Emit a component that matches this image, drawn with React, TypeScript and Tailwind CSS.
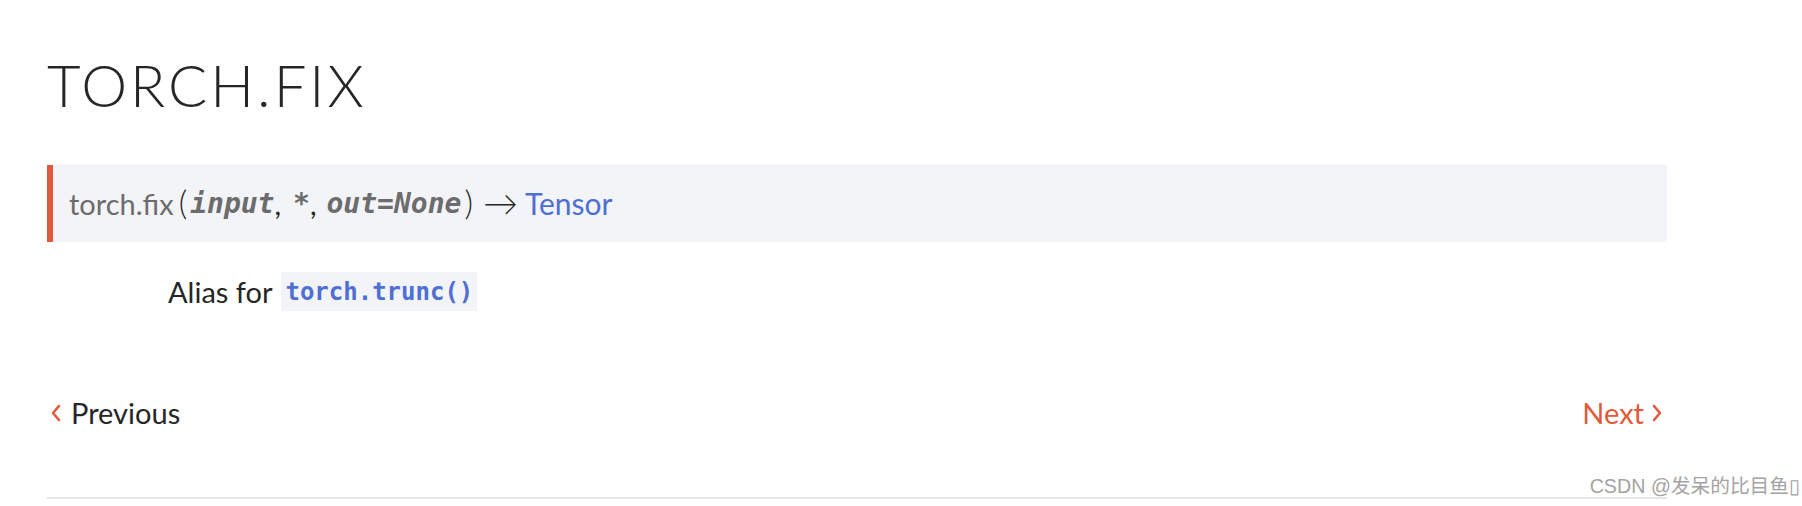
export default function App() {
  const mono = { fontFamily: "'DejaVu Sans Mono', monospace" };
  return (
    <div className="relative w-[1802px] h-[506px] bg-white overflow-hidden" style={{ fontFamily: "Lato, 'Open Sans', sans-serif" }}>
      <div className="ml-[47px] w-[1620px]">
        <h1 className="pt-[51px] text-[58px] leading-[68px] font-light tracking-[3px] text-[#262626]">TORCH.FIX</h1>

        <div className="mt-[46px] flex items-center h-[77px] bg-[#f3f4f7] border-l-[6px] border-[#e05a3b] pl-[16px]">
          <span className="text-[29px] text-[#6c6c6d]">torch.fix</span>
          <span className="text-[33px] font-light text-[#262626] ml-[5px] -mt-[2px]">(</span>
          <span className="text-[28px] italic font-semibold text-[#6c6c6d] ml-[3px]" style={mono}>input</span>
          <span className="text-[29px] text-[#262626]">,</span>
          <span className="text-[28px] italic font-semibold text-[#6c6c6d] ml-[12px]" style={mono}>*</span>
          <span className="text-[29px] text-[#262626]">,</span>
          <span className="text-[28px] italic font-semibold text-[#6c6c6d] ml-[10px]" style={mono}>out=None</span>
          <span className="text-[33px] font-light text-[#262626] ml-[3px] -mt-[2px]">)</span>
          <span className="text-[35px] leading-none font-light text-[#262626] ml-[10px] -mt-[3px]">→</span>
          <span className="text-[30px] text-[#4e6fd4] ml-[7px]">Tensor</span>
        </div>

        <div className="mt-[28px] ml-[121px] flex items-center">
          <span className="text-[29px] text-[#262626]">Alias for</span>
          <code className="ml-[9px] h-[39px] px-[4px] flex items-center bg-[#f3f4f7] text-[24px] font-semibold text-[#4e6fd4]" style={mono}>torch.trunc()</code>
        </div>

        <div className="mt-[77px] flex items-center justify-between">
          <a className="flex items-center text-[29px] text-[#262626]">
            <svg width="10" height="18" viewBox="0 0 10 18" className="ml-[4px] mr-[10px] mt-[1px]" fill="none" stroke="#e05a3b" strokeWidth="2.6" strokeLinecap="round" strokeLinejoin="round">
              <polyline points="8,2 2,9 8,16" />
            </svg>
            Previous
          </a>
          <a className="flex items-center text-[29px] text-[#e05a3b] mr-[5px]">
            Next
            <svg width="10" height="18" viewBox="0 0 10 18" className="ml-[8px] mt-[1px]" fill="none" stroke="#e05a3b" strokeWidth="2.6" strokeLinecap="round" strokeLinejoin="round">
              <polyline points="2,2 8,9 2,16" />
            </svg>
          </a>
        </div>

        <div className="mt-[63px] h-[2px] bg-[#e5e5e5]" />
      </div>

      <div className="absolute right-[2px] bottom-[4px] text-[19.7px] text-[#a3a3a3]" style={{ fontFamily: "'Liberation Sans', 'Noto Sans CJK SC', sans-serif" }}>
        CSDN @发呆的比目鱼▯
      </div>
    </div>
  );
}
